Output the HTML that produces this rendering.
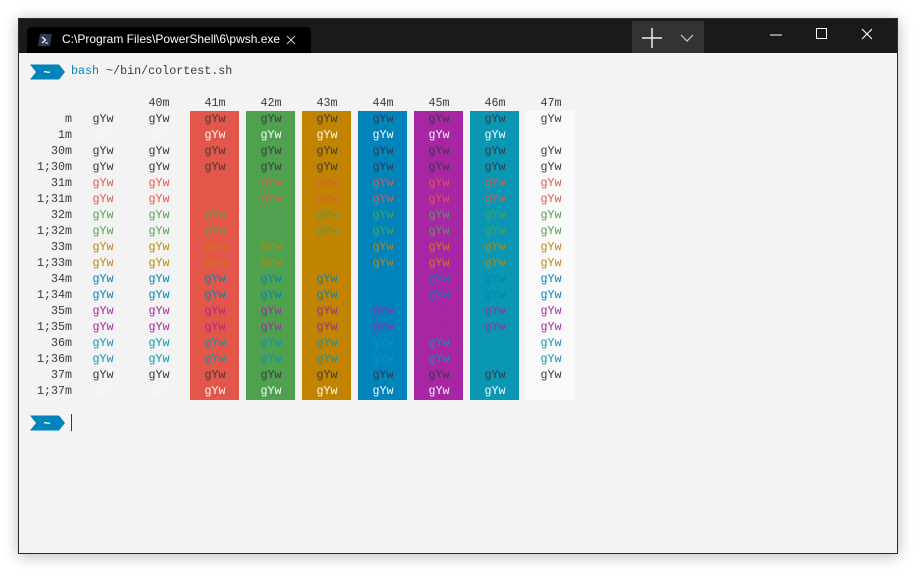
<!DOCTYPE html>
<html><head><meta charset="utf-8"><style>
*{margin:0;padding:0;box-sizing:border-box}
body{width:921px;height:577px;background:#fff;position:relative;overflow:hidden;font-family:"Liberation Mono",monospace}
#win{position:absolute;left:18px;top:18px;width:880px;height:536px;background:#f3f3f3;border:1px solid #2a2a2a;box-shadow:0 2px 14px rgba(0,0,0,.28)}
#tb{position:absolute;left:0;top:0;width:878px;height:34px;background:#1a1a1a}
#tab{position:absolute;left:8px;top:8px;width:284px;height:26px;background:#000;border-radius:4px 4px 0 0;color:#fff;font:12px "Liberation Sans",sans-serif}
#plus{position:absolute;left:613px;top:2px;width:72px;height:32px;background:#333}
.t{position:absolute;font-size:11.7px;line-height:16px;white-space:pre;color:#383a42}
.row{position:absolute;left:0;height:16px;font-size:11.7px;line-height:16px;white-space:pre}
.row b{position:absolute;left:8px;width:45px;text-align:right;font-weight:normal;color:#383a42}
.row i{position:absolute;width:56px;text-align:center;font-style:normal}
.bg{position:absolute;top:92px;width:49px;height:289px}
</style></head><body>
<div id="win">
<div id="tb">
 <div id="tab">
  <svg style="position:absolute;left:11px;top:7px" width="14" height="12" viewBox="0 0 14 12"><path d="M2 0H14L12 12H0Z" fill="#2b3a55"/><path d="M4 3L7.5 6L4 9" stroke="#fff" stroke-width="1.2" fill="none"/><path d="M7 9H10" stroke="#fff" stroke-width="1"/></svg>
  <span style="position:absolute;left:35px;top:5px">C:\Program Files\PowerShell\6\pwsh.exe</span>
  <svg style="position:absolute;left:259px;top:8px" width="10" height="10"><path d="M1 1L9 9M9 1L1 9" stroke="#ccc" stroke-width="1"/></svg>
 </div>
 <div id="plus">
  <svg style="position:absolute;left:9px;top:6px" width="22" height="22"><path d="M11 1V21M1 11H21" stroke="#eee" stroke-width="1.5"/></svg>
  <svg style="position:absolute;left:48px;top:13px" width="14" height="8"><path d="M1 1L7 7L13 1" stroke="#ccc" stroke-width="1.2" fill="none"/></svg>
 </div>
 <svg style="position:absolute;left:751px;top:15px" width="12" height="2"><path d="M0 1H12" stroke="#fff" stroke-width="1"/></svg>
 <svg style="position:absolute;left:797px;top:9px" width="12" height="12"><rect x=".5" y=".5" width="10" height="10" stroke="#fff" fill="none"/></svg>
 <svg style="position:absolute;left:842px;top:9px" width="12" height="12"><path d="M1 1L11 11M11 1L1 11" stroke="#fff" stroke-width="1.1"/></svg>
</div>
<svg style="position:absolute;left:10px;top:45px" width="40" height="16"><path d="M1 .5H30L36 8L30 15.5H1L7 8Z" fill="#0184bc"/><text x="18" y="12" font-size="12" font-weight="bold" fill="#fff" font-family="Liberation Mono" text-anchor="middle">~</text></svg>
<div class="t" style="left:52px;top:44px"><span style="color:#0184bc">bash</span> ~/bin/colortest.sh</div>

<div class="bg" style="left:171px;background:#e45649"></div>
<div class="bg" style="left:227px;background:#50a14f"></div>
<div class="bg" style="left:283px;background:#c18401"></div>
<div class="bg" style="left:339px;background:#0184bc"></div>
<div class="bg" style="left:395px;background:#a626a4"></div>
<div class="bg" style="left:451px;background:#0997b3"></div>
<div class="bg" style="left:507px;background:#fafafa"></div>

<div class="row" style="top:76px;color:#383a42"><i style="left:112px">40m</i><i style="left:168px">41m</i><i style="left:224px">42m</i><i style="left:280px">43m</i><i style="left:336px">44m</i><i style="left:392px">45m</i><i style="left:448px">46m</i><i style="left:504px">47m</i></div>

<div class="row" style="top:92px;color:#383a42"><b>m</b><i style="left:56px">gYw</i><i style="left:112px">gYw</i><i style="left:168px">gYw</i><i style="left:224px">gYw</i><i style="left:280px">gYw</i><i style="left:336px">gYw</i><i style="left:392px">gYw</i><i style="left:448px">gYw</i><i style="left:504px">gYw</i></div>
<div class="row" style="top:108px;color:#fafafa"><b>1m</b><i style="left:56px">gYw</i><i style="left:112px">gYw</i><i style="left:168px">gYw</i><i style="left:224px">gYw</i><i style="left:280px">gYw</i><i style="left:336px">gYw</i><i style="left:392px">gYw</i><i style="left:448px">gYw</i><i style="left:504px">gYw</i></div>
<div class="row" style="top:124px;color:#383a42"><b>30m</b><i style="left:56px">gYw</i><i style="left:112px">gYw</i><i style="left:168px">gYw</i><i style="left:224px">gYw</i><i style="left:280px">gYw</i><i style="left:336px">gYw</i><i style="left:392px">gYw</i><i style="left:448px">gYw</i><i style="left:504px">gYw</i></div>
<div class="row" style="top:140px;color:#383a42"><b>1;30m</b><i style="left:56px">gYw</i><i style="left:112px">gYw</i><i style="left:168px">gYw</i><i style="left:224px">gYw</i><i style="left:280px">gYw</i><i style="left:336px">gYw</i><i style="left:392px">gYw</i><i style="left:448px">gYw</i><i style="left:504px">gYw</i></div>
<div class="row" style="top:156px;color:#e45649"><b>31m</b><i style="left:56px">gYw</i><i style="left:112px">gYw</i><i style="left:168px">gYw</i><i style="left:224px">gYw</i><i style="left:280px">gYw</i><i style="left:336px">gYw</i><i style="left:392px">gYw</i><i style="left:448px">gYw</i><i style="left:504px">gYw</i></div>
<div class="row" style="top:172px;color:#e45649"><b>1;31m</b><i style="left:56px">gYw</i><i style="left:112px">gYw</i><i style="left:168px">gYw</i><i style="left:224px">gYw</i><i style="left:280px">gYw</i><i style="left:336px">gYw</i><i style="left:392px">gYw</i><i style="left:448px">gYw</i><i style="left:504px">gYw</i></div>
<div class="row" style="top:188px;color:#50a14f"><b>32m</b><i style="left:56px">gYw</i><i style="left:112px">gYw</i><i style="left:168px">gYw</i><i style="left:224px">gYw</i><i style="left:280px">gYw</i><i style="left:336px">gYw</i><i style="left:392px">gYw</i><i style="left:448px">gYw</i><i style="left:504px">gYw</i></div>
<div class="row" style="top:204px;color:#50a14f"><b>1;32m</b><i style="left:56px">gYw</i><i style="left:112px">gYw</i><i style="left:168px">gYw</i><i style="left:224px">gYw</i><i style="left:280px">gYw</i><i style="left:336px">gYw</i><i style="left:392px">gYw</i><i style="left:448px">gYw</i><i style="left:504px">gYw</i></div>
<div class="row" style="top:220px;color:#c18401"><b>33m</b><i style="left:56px">gYw</i><i style="left:112px">gYw</i><i style="left:168px">gYw</i><i style="left:224px">gYw</i><i style="left:280px">gYw</i><i style="left:336px">gYw</i><i style="left:392px">gYw</i><i style="left:448px">gYw</i><i style="left:504px">gYw</i></div>
<div class="row" style="top:236px;color:#c18401"><b>1;33m</b><i style="left:56px">gYw</i><i style="left:112px">gYw</i><i style="left:168px">gYw</i><i style="left:224px">gYw</i><i style="left:280px">gYw</i><i style="left:336px">gYw</i><i style="left:392px">gYw</i><i style="left:448px">gYw</i><i style="left:504px">gYw</i></div>
<div class="row" style="top:252px;color:#0184bc"><b>34m</b><i style="left:56px">gYw</i><i style="left:112px">gYw</i><i style="left:168px">gYw</i><i style="left:224px">gYw</i><i style="left:280px">gYw</i><i style="left:336px">gYw</i><i style="left:392px">gYw</i><i style="left:448px">gYw</i><i style="left:504px">gYw</i></div>
<div class="row" style="top:268px;color:#0184bc"><b>1;34m</b><i style="left:56px">gYw</i><i style="left:112px">gYw</i><i style="left:168px">gYw</i><i style="left:224px">gYw</i><i style="left:280px">gYw</i><i style="left:336px">gYw</i><i style="left:392px">gYw</i><i style="left:448px">gYw</i><i style="left:504px">gYw</i></div>
<div class="row" style="top:284px;color:#a626a4"><b>35m</b><i style="left:56px">gYw</i><i style="left:112px">gYw</i><i style="left:168px">gYw</i><i style="left:224px">gYw</i><i style="left:280px">gYw</i><i style="left:336px">gYw</i><i style="left:392px">gYw</i><i style="left:448px">gYw</i><i style="left:504px">gYw</i></div>
<div class="row" style="top:300px;color:#a626a4"><b>1;35m</b><i style="left:56px">gYw</i><i style="left:112px">gYw</i><i style="left:168px">gYw</i><i style="left:224px">gYw</i><i style="left:280px">gYw</i><i style="left:336px">gYw</i><i style="left:392px">gYw</i><i style="left:448px">gYw</i><i style="left:504px">gYw</i></div>
<div class="row" style="top:316px;color:#0997b3"><b>36m</b><i style="left:56px">gYw</i><i style="left:112px">gYw</i><i style="left:168px">gYw</i><i style="left:224px">gYw</i><i style="left:280px">gYw</i><i style="left:336px">gYw</i><i style="left:392px">gYw</i><i style="left:448px">gYw</i><i style="left:504px">gYw</i></div>
<div class="row" style="top:332px;color:#0997b3"><b>1;36m</b><i style="left:56px">gYw</i><i style="left:112px">gYw</i><i style="left:168px">gYw</i><i style="left:224px">gYw</i><i style="left:280px">gYw</i><i style="left:336px">gYw</i><i style="left:392px">gYw</i><i style="left:448px">gYw</i><i style="left:504px">gYw</i></div>
<div class="row" style="top:348px;color:#383a42"><b>37m</b><i style="left:56px">gYw</i><i style="left:112px">gYw</i><i style="left:168px">gYw</i><i style="left:224px">gYw</i><i style="left:280px">gYw</i><i style="left:336px">gYw</i><i style="left:392px">gYw</i><i style="left:448px">gYw</i><i style="left:504px">gYw</i></div>
<div class="row" style="top:364px;color:#fafafa"><b>1;37m</b><i style="left:56px">gYw</i><i style="left:112px">gYw</i><i style="left:168px">gYw</i><i style="left:224px">gYw</i><i style="left:280px">gYw</i><i style="left:336px">gYw</i><i style="left:392px">gYw</i><i style="left:448px">gYw</i><i style="left:504px">gYw</i></div>

<svg style="position:absolute;left:10px;top:396px" width="40" height="16"><path d="M1 .5H30L36 8L30 15.5H1L7 8Z" fill="#0184bc"/><text x="18" y="12" font-size="12" font-weight="bold" fill="#fff" font-family="Liberation Mono" text-anchor="middle">~</text></svg>
<div style="position:absolute;left:52px;top:395px;width:1px;height:17px;background:#383a42"></div>
</div>
</body></html>
